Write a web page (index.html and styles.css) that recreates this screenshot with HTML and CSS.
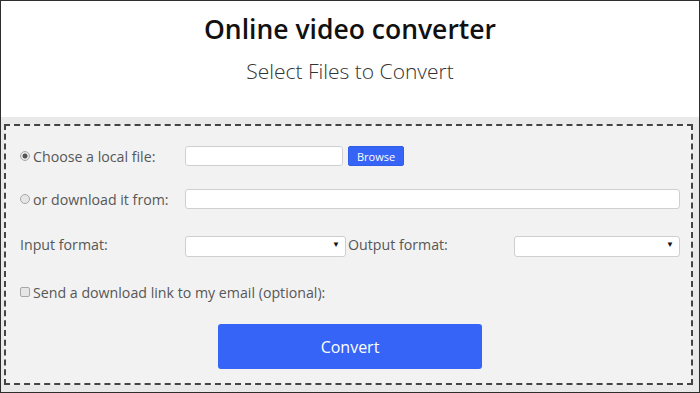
FILE: index.html
```html
<!DOCTYPE html>
<html>
  <head>
    <title>Online video converter</title>
    <link rel="stylesheet" href="styles.css">
  </head>
  <body>
    <div class="frame">
      <div class="header">
        <h1>Online video converter</h1>
        <h2>Select Files to Convert</h2>
      </div>

      <div class="panel">
        <form class="box">
          <div class="row row-file">
            <label class="lbl"><input type="radio" name="src" class="radio" checked>Choose a local file:</label>
            <div class="file-wrap">
              <input type="text" class="field file-field">
              <button type="button" class="browse">Browse</button>
            </div>
          </div>

          <div class="row row-url">
            <label class="lbl"><input type="radio" name="src" class="radio">or download it from:</label>
            <input type="text" class="field url-field">
          </div>

          <div class="row row-format">
            <label class="lbl">Input format:</label>
            <span class="select-wrap"><select class="field sel"><option></option></select></span>
            <label class="lbl">Output format:</label>
            <span class="select-wrap"><select class="field sel"><option></option></select></span>
          </div>

          <div class="row row-mail">
            <label class="lbl"><input type="checkbox" class="check">Send a download link to my email (optional):</label>
          </div>

          <div class="actions">
            <button type="button" class="convert">Convert</button>
          </div>
        </form>
      </div>
    </div>
  </body>
</html>
```

FILE: styles.css
```css
* {
  box-sizing: border-box;
}

body {
  margin: 0;
  font-family: "Open Sans", Arial, sans-serif;
  background-color: #fff;
}

.frame {
  width: 700px;
  height: 393px;
  border: 1px solid #2e2e2e;
  display: flex;
  flex-direction: column;
}

.header {
  height: 116px;
  background-color: #fff;
  text-align: center;
  padding-top: 11px;
}

h1 {
  margin: 0;
  font-size: 26.5px;
  line-height: 34px;
  font-weight: 600;
  color: #111;
}

h2 {
  margin: 11px 0 0;
  font-size: 21px;
  line-height: 28px;
  font-weight: 300;
  color: #333;
}

.panel {
  flex: 1;
  background-color: #e9e9e9;
  padding: 7px 6px 7px 3px;
}

.box {
  margin: 0;
  height: 100%;
  border: 2px dashed #444;
  background-color: #f2f2f2;
  padding: 20px 11px 0 14px;
}

.row {
  display: grid;
  grid-template-columns: 165px 1fr;
  align-items: center;
}

.row-file {
  height: 20px;
  margin-bottom: 23px;
}

.row-url {
  height: 20px;
  margin-bottom: 25px;
}

.row-format {
  height: 21px;
  grid-template-columns: 165px 163px 166px 1fr;
  margin-bottom: 27px;
}

.row-mail {
  height: 20px;
  grid-template-columns: 1fr;
  margin-bottom: 22px;
}

.lbl {
  display: flex;
  align-items: center;
  font-size: 14.2px;
  color: #575757;
  white-space: nowrap;
}

.radio {
  appearance: none;
  margin: 0 3px 0 0;
  width: 10px;
  height: 10px;
  border: 1px solid #a8a8a8;
  border-radius: 50%;
  background-color: #e6e6e6;
}

.radio:checked {
  background: radial-gradient(circle, #555 0 2.2px, #e6e6e6 2.8px);
}

.check {
  appearance: none;
  margin: 0 3px 0 0;
  width: 10px;
  height: 10px;
  border: 1px solid #a8a8a8;
  border-radius: 2px;
  background-color: #e6e6e6;
}

.field {
  height: 20px;
  border: 1px solid #cfcfcf;
  border-radius: 3px;
  background-color: #fff;
  font-family: inherit;
  font-size: 13px;
  padding: 0 6px;
  outline: none;
}

.file-wrap {
  display: flex;
  align-items: center;
}

.file-field {
  width: 158px;
  margin-right: 5px;
}

.browse {
  height: 20px;
  width: 56px;
  padding: 0;
  border: 1px solid #2f5ee8;
  border-radius: 2px;
  background-color: #3564f6;
  color: #fff;
  font-family: inherit;
  font-size: 11px;
}

.url-field {
  width: 100%;
}

.select-wrap {
  position: relative;
  display: block;
  height: 21px;
}

.sel {
  appearance: none;
  width: 100%;
  height: 21px;
}

.select-wrap::after {
  content: "\25BC";
  position: absolute;
  right: 6px;
  top: 5px;
  font-size: 8px;
  line-height: 10px;
  color: #111;
  pointer-events: none;
}

.row-format .select-wrap:first-of-type {
  margin-right: 2px;
}

.actions {
  display: flex;
  justify-content: center;
}

.convert {
  width: 264px;
  height: 45px;
  border: none;
  border-radius: 3px;
  background-color: #3564f6;
  color: #fff;
  font-family: inherit;
  font-size: 16px;
}
```
